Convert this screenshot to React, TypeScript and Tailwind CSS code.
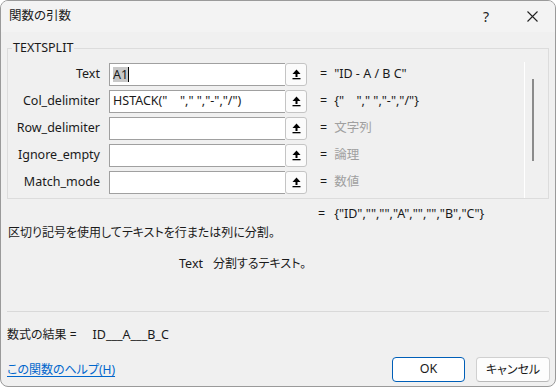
import React from "react";

const rows = [
  { label: "Text", value: "A1", result: "\"ID - A / B C\"", ph: false, sel: true },
  { label: "Col_delimiter", value: "HSTACK(\"　\",\" \",\"-\",\"/\")", result: "{\"　\",\" \",\"-\",\"/\"}", ph: false, sel: false },
  { label: "Row_delimiter", value: "", result: "文字列", ph: true, sel: false },
  { label: "Ignore_empty", value: "", result: "論理", ph: true, sel: false },
  { label: "Match_mode", value: "", result: "数値", ph: true, sel: false },
];

function RefIcon() {
  return (
    <svg width="9" height="11" viewBox="0 0 9 11">
      <polygon points="4.5,0.5 0.5,5 8.5,5" fill="#000" />
      <rect x="3.5" y="4.5" width="2" height="3.5" fill="#000" />
      <rect x="0.5" y="9" width="8" height="1.3" fill="#000" />
    </svg>
  );
}

export default function App() {
  return (
    <div className="w-[557px] h-[388px] bg-white font-['Noto_Sans','Noto_Sans_CJK_JP',sans-serif] [font-feature-settings:'palt'] text-[12px] text-[#1a1a1a]">
      <div className="w-[556px] h-[387px] border border-[#9a9a9a] rounded-[8px] overflow-hidden flex flex-col bg-[#f0f0f0]">
        {/* title bar */}
        <div className="h-[31px] shrink-0 bg-[#f3f3f3] flex items-center pl-[8px]">
          <span className="text-[12.5px] leading-none">関数の引数</span>
          <div className="flex-1" />
          <span className="text-[14px] leading-none mr-[38px] text-[#222]">?</span>
          <svg width="11" height="11" viewBox="0 0 11 11" className="mr-[17px]">
            <path d="M0.5 0.5 L10.5 10.5 M10.5 0.5 L0.5 10.5" stroke="#222" strokeWidth="1.1" />
          </svg>
        </div>

        {/* body */}
        <div className="flex-1 flex flex-col px-[6px]">
          <fieldset className="mt-[9px] border border-[#dcdcdc] rounded-none">
            <legend className="ml-[4px] px-[1px] leading-[14px] text-[12.5px]">TEXTSPLIT</legend>
            <div className="flex h-[136px] mt-[7px]">
              <div className="w-[516px] flex flex-col gap-[4px] pt-[1px]">
                {rows.map((r) => (
                  <div key={r.label} className="flex items-center h-[23px]">
                    <div className="w-[92px] text-right text-[12.5px] leading-none">{r.label}</div>
                    <div className="ml-[9px] w-[176px] h-[23px] bg-white border border-r-0 border-[#a0a0a0] flex items-center pl-[3px] text-[12.5px] whitespace-pre">
                      {r.sel ? (
                        <>
                          <span className="bg-[#c8c8c8] leading-[15px]">{r.value}</span>
                          <span className="w-px h-[15px] bg-black" />
                        </>
                      ) : (
                        <span>{r.value}</span>
                      )}
                    </div>
                    <div className="w-[22px] h-[23px] bg-[#fbfbfb] border border-[#c4c4c4] rounded-[3px] flex items-center justify-center">
                      <RefIcon />
                    </div>
                    <span className="ml-[13px] text-[12.5px]">=</span>
                    <span className={"ml-[7px] text-[12.5px] whitespace-pre " + (r.ph ? "text-[#a0a0a0]" : "text-[#1a1a1a]")}>{r.result}</span>
                  </div>
                ))}
              </div>
              <div className="w-px bg-white" />
              <div className="flex-1 pl-[7px] pt-[17px]">
                <div className="w-[2px] h-[82px] bg-[#8b8b8b]" />
              </div>
            </div>
          </fieldset>

          <div className="mt-[7px] h-[16px] flex items-center text-[12.5px] whitespace-pre">
            <span className="ml-[311px]">=</span>
            <span className="ml-[9px]">{"{\"ID\",\"\",\"\",\"A\",\"\",\"\",\"B\",\"C\"}"}</span>
          </div>
          <div className="mt-[3px] h-[16px] flex items-center pl-[1px] text-[12px]">
            区切り記号を使用してテキストを行または列に分割。
          </div>
          <div className="mt-[15px] h-[16px] flex items-center text-[12.5px]">
            <span className="ml-[172px]">Text</span>
            <span className="ml-[10px] text-[12px]">分割するテキスト。</span>
          </div>

          <div className="mt-[39px] h-px bg-[#d9d9d9]" />

          <div className="mt-[15px] h-[16px] flex items-center text-[12.5px] whitespace-pre">
            <span className="text-[12px]">数式の結果 =</span>
            <span className="ml-[16px]">ID___A___B_C</span>
          </div>

          <div className="mt-[14px] flex items-center">
            <span className="text-[12px] text-[#0066cc] underline underline-offset-2">この関数のヘルプ(H)</span>
            <div className="flex-1" />
            <button className="w-[73px] h-[25px] bg-white border border-[#005fb8] rounded-[4px] text-[12.5px] leading-none">OK</button>
            <button className="ml-[11px] w-[74px] h-[25px] bg-[#fdfdfd] border border-[#d0d0d0] border-b-[#b8b8b8] rounded-[4px] text-[12px] leading-none mr-[-1px]">キャンセル</button>
          </div>
        </div>
      </div>
    </div>
  );
}
